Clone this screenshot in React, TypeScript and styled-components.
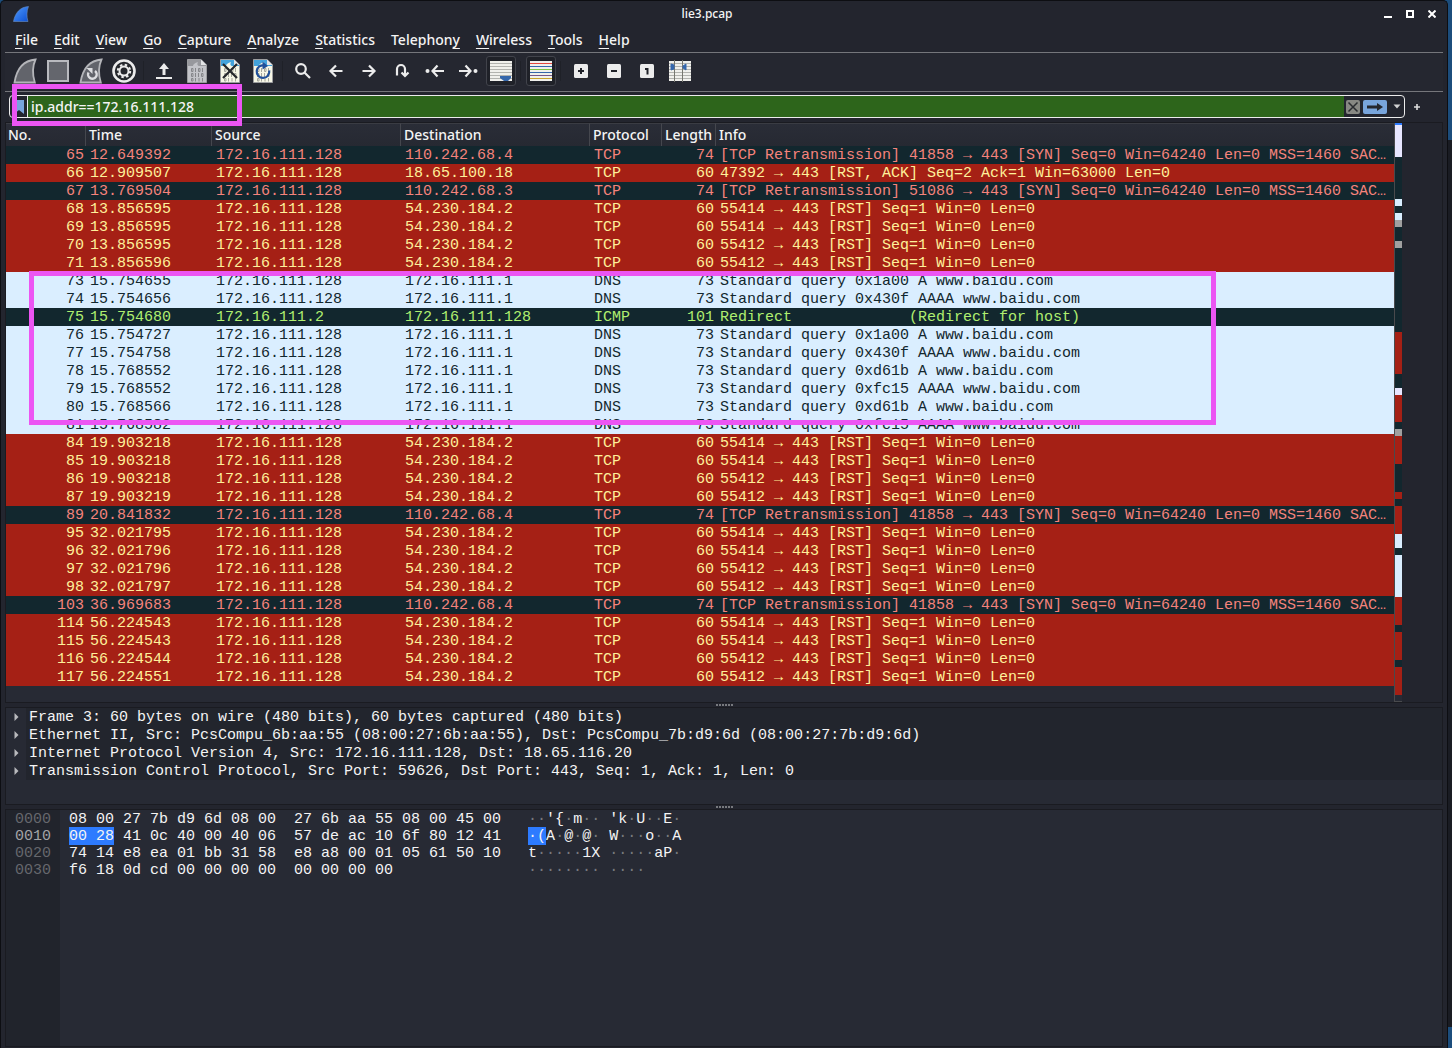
import React from "react";
import styled, { createGlobalStyle } from "styled-components";

const ui = `"Noto Sans", "Open Sans", sans-serif`;
const mono = `"Liberation Mono", "DejaVu Sans Mono", monospace`;

const GlobalStyle = createGlobalStyle`
  *, *::before, *::after { box-sizing: border-box; }
  body { margin: 0; background: #1a1c23; }
  button { margin: 0; padding: 0; border: 0; background: none; color: inherit; font: inherit; }
`;

const Desktop = styled.div`
  display: grid;
  grid-template-columns: minmax(0, 1fr) 4px;
  min-height: 100vh;
  background: #1c4d7c;
  color: #f4f4f4;
  font: 500 14px/20px ${ui};
`;

const Window = styled.main`
  display: flex;
  flex-direction: column;
  padding: 0 4px 1px;
  border: 1px solid #0d0e12;
  border-bottom: 0;
  border-radius: 5px 5px 0 0;
  background: #23252e;
`;

const DesktopEdge = styled.div`
  display: flex;
  flex-direction: column;
  padding: 140px 0 21px;
  &::before { content: ""; flex: 1; background: #1a1c23; }
`;

const TitleBar = styled.header`
  display: flex;
  align-items: center;
  height: 26px;
  padding: 0 0 0 8px;
`;

const Title = styled.h1`
  flex: 1;
  margin: 0;
  padding-left: 8px;
  text-align: center;
  font-size: 12px;
  font-weight: 500;
  line-height: 16px;
`;

const WindowButtons = styled.div`
  display: flex;
`;

const WindowButton = styled.button`
  display: grid;
  place-items: center;
  width: 22px;
  height: 20px;
`;

const MenuBar = styled.nav`
  display: flex;
  align-items: flex-start;
  gap: 16px;
  height: 26px;
  padding: 0 10px;
  border-bottom: 1px solid #75767b;
`;

const MenuButton = styled.button`
  line-height: 26px;
  white-space: nowrap;
  u { text-underline-offset: 3px; text-decoration-thickness: 1px; }
`;

const ToolBar = styled.div`
  display: flex;
  align-items: center;
  height: 39px;
  padding: 0 3px 2px;
  border-bottom: 1px solid #75767b;
  background: #252730;
`;

const ToolButton = styled.button`
  display: grid;
  place-items: center;
  width: 33px;
  height: 36px;
`;

const ToggleFrame = styled.span`
  display: grid;
  place-items: center;
  width: 30px;
  height: 30px;
  border: 1px solid #41434b;
  border-radius: 3px;
  background: #1f2128;
`;

const ToolDivider = styled.span`
  width: 1px;
  height: 20px;
  margin: 0 3px;
  background: #1f2128;
`;

const FilterBar = styled.form`
  position: relative;
  display: flex;
  align-items: center;
  padding: 3px 19px 4px 4px;
`;

const FilterBox = styled.div`
  display: flex;
  flex: 1;
  height: 23px;
  overflow: hidden;
  border: 1px solid #ececec;
  border-radius: 4px;
`;

const BookmarkButton = styled.button`
  display: grid;
  place-items: center;
  width: 18px;
  border-right: 1px solid #ececec;
`;

const FilterInput = styled.input`
  flex: 1;
  min-width: 0;
  padding: 0 3px;
  border: 0;
  outline: 0;
  background: #2d651b;
  color: #f4f4f4;
  font: 500 14px/20px ${ui};
`;

const FilterActions = styled.div`
  display: flex;
  align-items: center;
  gap: 3px;
  padding-left: 2px;
`;

const FilterAction = styled.button<{ $width: number; $fill?: string }>`
  display: grid;
  place-items: center;
  width: ${(p) => p.$width}px;
  height: 14px;
  border-radius: 2px;
  background: ${(p) => p.$fill ?? "none"};
`;

const AddButton = styled.button`
  display: grid;
  place-items: center;
  width: 14px;
  height: 16px;
`;

const AddSlot = styled.div`
  padding-left: 5px;
`;

const Highlight = styled.div<{ $left: number; $top: number; $width: number; $height: number }>`
  position: absolute;
  z-index: 2;
  left: ${(p) => p.$left}px;
  top: ${(p) => p.$top}px;
  width: ${(p) => p.$width}px;
  height: ${(p) => p.$height}px;
  border: 5px solid #ec55f3;
  pointer-events: none;
`;

const Pane = styled.section<{ $grow?: boolean }>`
  position: relative;
  display: flex;
  flex: ${(p) => (p.$grow ? "1 0 auto" : "none")};
  border: 1px solid #1a1b21;
  background: #272a34;
`;

const PacketArea = styled.div`
  flex: 1;
  min-width: 0;
  padding-bottom: 16px;
`;

const PacketTable = styled.table`
  width: 100%;
  table-layout: fixed;
  border-collapse: separate;
  border-spacing: 0;
`;

const Column = styled.col<{ $width?: number }>`
  width: ${(p) => (p.$width ? `${p.$width}px` : "auto")};
`;

const HeadCell = styled.th`
  height: 23px;
  padding: 0 2px 0 3px;
  overflow: hidden;
  border-top: 1px solid #3a3c43;
  border-right: 1px solid #45474e;
  background: linear-gradient(#2a2d37, #262932);
  font-weight: 500;
  line-height: 20px;
  text-align: left;
  white-space: nowrap;
  &:first-child { padding-left: 2px; }
  &:last-child { border-right: 0; }
`;

type Kind = "reset" | "bad" | "dns" | "icmp";

const palette: Record<Kind, [string, string]> = {
  reset: ["#a52015", "#fff09a"],
  bad: ["#12272e", "#f5837c"],
  dns: ["#daeeff", "#12272e"],
  icmp: ["#12272e", "#b0ef70"],
};

const PacketRow = styled.tr<{ $kind: Kind }>`
  background: ${(p) => palette[p.$kind][0]};
  color: ${(p) => palette[p.$kind][1]};
`;

const Cell = styled.td<{ $right?: boolean }>`
  height: 18px;
  padding: 1px ${(p) => (p.$right ? 2 : 4)}px 0 4px;
  overflow: hidden;
  font: 15px/17px ${mono};
  text-align: ${(p) => (p.$right ? "right" : "left")};
  text-overflow: ellipsis;
  white-space: pre;
`;

const MiniMap = styled.div`
  width: 8px;
  border-left: 1px solid #494a4d;
  border-bottom: 1px solid #494a4d;
`;

const MiniMapBand = styled.div<{ $height: number; $color: string }>`
  height: ${(p) => p.$height}px;
  background: ${(p) => p.$color};
`;

const ScrollGutter = styled.div`
  width: 40px;
  background: #23252e;
`;

const Splitter = styled.div`
  display: flex;
  justify-content: center;
  align-items: center;
  gap: 1px;
  height: 4px;
`;

const Grip = styled.span`
  width: 2px;
  height: 2px;
  background: #77797e;
`;

const DetailTree = styled.ul`
  flex: 1;
  margin: 0;
  padding: 0 0 24px;
  list-style: none;
`;

const DetailItem = styled.li`
  display: flex;
  height: 18px;
  font: 15px/17px ${mono};
  white-space: pre;
`;

const Expander = styled.button`
  display: grid;
  place-items: center;
  width: 20px;
`;

const DetailText = styled.span`
  flex: 1;
  padding: 1px 0 0 3px;
  background: #22252d;
`;

const HexOffsets = styled.div`
  width: 54px;
  padding: 1px 0 0 9px;
  background: #21242c;
`;

const HexBytes = styled.div`
  padding: 1px 0 0 9px;
`;

const HexAscii = styled.div`
  padding: 1px 0 0 27px;
`;

const HexLine = styled.div<{ $tone?: string }>`
  height: 17px;
  color: ${(p) => p.$tone ?? "#f4f4f4"};
  font: 15px/17px ${mono};
  white-space: pre;
`;

const Selected = styled.mark`
  padding-top: 1px;
  background: #2d7bff;
  color: #f4f4f4;
`;

const Dim = styled.span`
  color: #77797e;
`;

const menus: [string, string, string][] = [
  ["", "F", "ile"], ["", "E", "dit"], ["", "V", "iew"], ["", "G", "o"],
  ["", "C", "apture"], ["", "A", "nalyze"], ["", "S", "tatistics"],
  ["Telephon", "y", ""], ["", "W", "ireless"], ["", "T", "ools"], ["", "H", "elp"],
];

const retransmit = (port: number) =>
  `[TCP Retransmission] ${port} → 443 [SYN] Seq=0 Win=64240 Len=0 MSS=1460 SAC…`;
const reset = (port: number) => `${port} → 443 [RST] Seq=1 Win=0 Len=0`;
const query = (id: string, type: string) => `Standard query ${id} ${type} www.baidu.com`;

type Packet = [number, string, string, string, string, number, string, Kind];
const me = "172.16.111.128";
const rst = (no: number, time: string, port: number): Packet =>
  [no, time, me, "54.230.184.2", "TCP", 60, reset(port), "reset"];
const dns = (no: number, time: string, id: string, type: string): Packet =>
  [no, time, me, "172.16.111.1", "DNS", 73, query(id, type), "dns"];
const bad = (no: number, time: string, dst: string, port: number): Packet =>
  [no, time, me, dst, "TCP", 74, retransmit(port), "bad"];

const packets: Packet[] = [
  bad(65, "12.649392", "110.242.68.4", 41858),
  [66, "12.909507", me, "18.65.100.18", "TCP", 60, "47392 → 443 [RST, ACK] Seq=2 Ack=1 Win=63000 Len=0", "reset"],
  bad(67, "13.769504", "110.242.68.3", 51086),
  rst(68, "13.856595", 55414),
  rst(69, "13.856595", 55414),
  rst(70, "13.856595", 55412),
  rst(71, "13.856596", 55412),
  dns(73, "15.754655", "0x1a00", "A"),
  dns(74, "15.754656", "0x430f", "AAAA"),
  [75, "15.754680", "172.16.111.2", me, "ICMP", 101, "Redirect             (Redirect for host)", "icmp"],
  dns(76, "15.754727", "0x1a00", "A"),
  dns(77, "15.754758", "0x430f", "AAAA"),
  dns(78, "15.768552", "0xd61b", "A"),
  dns(79, "15.768552", "0xfc15", "AAAA"),
  dns(80, "15.768566", "0xd61b", "A"),
  dns(81, "15.768582", "0xfc15", "AAAA"),
  rst(84, "19.903218", 55414),
  rst(85, "19.903218", 55414),
  rst(86, "19.903218", 55412),
  rst(87, "19.903219", 55412),
  bad(89, "20.841832", "110.242.68.4", 41858),
  rst(95, "32.021795", 55414),
  rst(96, "32.021796", 55414),
  rst(97, "32.021796", 55412),
  rst(98, "32.021797", 55412),
  bad(103, "36.969683", "110.242.68.4", 41858),
  rst(114, "56.224543", 55414),
  rst(115, "56.224543", 55414),
  rst(116, "56.224544", 55412),
  rst(117, "56.224551", 55412),
];

const R = "#a52015", D = "#12272e", L = "#daeeff", V = "#e7e6ff", G = "#a0a0a0";
const bands: [number, string][] = [
  [2, "#2d7bff"], [32, V], [42, D], [7, L], [7, D], [7, L], [7, G], [14, D], [7, G],
  [84, D], [42, R], [14, D], [7, V], [27, R], [7, D], [7, G], [28, R], [28, D], [7, R],
  [7, D], [28, R], [14, L], [7, D], [42, L], [28, R], [7, D], [28, R], [7, D], [28, R],
];

const details = [
  "Frame 3: 60 bytes on wire (480 bits), 60 bytes captured (480 bits)",
  "Ethernet II, Src: PcsCompu_6b:aa:55 (08:00:27:6b:aa:55), Dst: PcsCompu_7b:d9:6d (08:00:27:7b:d9:6d)",
  "Internet Protocol Version 4, Src: 172.16.111.128, Dst: 18.65.116.20",
  "Transmission Control Protocol, Src Port: 59626, Dst Port: 443, Seq: 1, Ack: 1, Len: 0",
];

// offset, selected bytes, remaining bytes, selected characters, remaining characters
const dump: [string, string, string, string, string][] = [
  ["0000", "", "08 00 27 7b d9 6d 08 00  27 6b aa 55 08 00 45 00", "", "··'{·m·· 'k·U··E·"],
  ["0010", "00 28", " 41 0c 40 00 40 06  57 de ac 10 6f 80 12 41", "·(", "A·@·@· W···o··A"],
  ["0020", "", "74 14 e8 ea 01 bb 31 58  e8 a8 00 01 05 61 50 10", "", "t·····1X ·····aP·"],
  ["0030", "", "f6 18 0d cd 00 00 00 00  00 00 00 00", "", "········ ····"],
];

const Ascii = ({ text }: { text: string }) => (
  <>
    {text.split(/(·+)/).map((part, i) =>
      part.startsWith("·") ? <Dim key={i}>{part}</Dim> : part
    )}
  </>
);

const ink = "#ececec";

const Fin = ({ children }: { children?: React.ReactNode }) => (
  <svg width="24" height="26" viewBox="0 0 24 26">
    <path d="M1.5 24.5C3.5 12 10 2.500 22.500 1.500C19.500 8 19.500 17 21.800 24.500Z" fill="#62646b" stroke="#b4b5b9" strokeWidth="1.800" />
    {children}
  </svg>
);

const Page = ({ top, paper, mark, children }: { top: string; paper: string; mark: string; children?: React.ReactNode }) => (
  <svg width="22" height="26" viewBox="0 0 22 26">
    <path d="M1.500 1.500H15L20.500 7V24.500H1.500Z" fill={paper} stroke="#9c9da0" />
    <path d="M2 2H15V7H20V8H14C11 8 11 6 12 4C9 5 7 6 7 8H2Z" fill={top} />
    <path d="M15 1.500V7H20.500Z" fill="#e3e4e6" />
    <g fill="none" stroke={mark} strokeWidth="1">
      <path d="M5.500 10.500h1.500v3h-1.500zM12.500 10.500h1.500v3h-1.500zM9.500 10v4M16.500 10v4" />
      <path d="M5.500 15.500h1.500v3h-1.500zM15.500 15.500h1.500v3h-1.500zM9.500 15v4M12.500 15v4" />
      <path d="M5.500 20.500h1.500v2.500h-1.500zM9.500 20v3.500M13 20v3.500M16.500 20v3.500" />
    </g>
    {children}
  </svg>
);

const Stroke = ({ d, children }: { d: string; children?: React.ReactNode }) => (
  <svg width="20" height="20" viewBox="0 0 20 20" fill="none" stroke={ink} strokeWidth="2.200">
    <path d={d} />
    {children}
  </svg>
);

const Tile = ({ d }: { d: string }) => (
  <svg width="14" height="14" viewBox="0 0 14 14">
    <rect width="14" height="14" rx="1.500" fill={ink} />
    <path d={d} fill="none" stroke="#202229" strokeWidth="2" />
  </svg>
);

const Lines = ({ colors, children }: { colors: string[]; children?: React.ReactNode }) => (
  <svg width="22" height="22" viewBox="0 0 22 22">
    <rect y="1" width="22" height="20" fill="#f0f0ec" />
    {colors.map((c, i) => (
      <path key={i} d={`M0 ${3.5 + i * 3}H22`} stroke={c} />
    ))}
    {children}
  </svg>
);

const gray6 = Array(6).fill("#b2b3af");

type Tool = { label: string; icon: React.ReactNode; pressed?: boolean } | null;

const tools: Tool[] = [
  { label: "Start capture", icon: <Fin /> },
  {
    label: "Stop capture",
    icon: (
      <svg width="22" height="22" viewBox="0 0 22 22">
        <rect x="1" y="1" width="20" height="20" fill="#64666d" stroke="#b9babf" strokeWidth="2" />
      </svg>
    ),
  },
  {
    label: "Restart capture",
    icon: (
      <Fin>
        <path d="M9.500 14.500A4.300 4.300 0 1 0 16 13" fill="none" stroke="#dddee1" strokeWidth="2.400" />
        <path d="M7.500 10H13.500V16Z" fill="#dddee1" />
      </Fin>
    ),
  },
  {
    label: "Capture options",
    icon: (
      <svg width="24" height="24" viewBox="0 0 24 24" fill="none">
        <circle cx="12" cy="12" r="10.500" stroke={ink} strokeWidth="2.600" fill="#25272c" />
        <circle cx="12" cy="12" r="4.500" stroke={ink} strokeWidth="2" />
        <circle cx="12" cy="12" r="6.200" stroke={ink} strokeWidth="2" strokeDasharray="2.435 2.435" />
      </svg>
    ),
  },
  null,
  {
    label: "Open file",
    icon: (
      <svg width="18" height="20" viewBox="0 0 18 20" fill={ink}>
        <path d="M1 16H17V18H1ZM7.500 14V8H4L9 2L14 8H10.500V14Z" />
      </svg>
    ),
  },
  { label: "Save file", icon: <Page top="#97989d" paper="#c3c4c9" mark="#85868a" /> },
  {
    label: "Close file",
    icon: (
      <Page top="#43a3dc" paper="#f6f6e6" mark="#a5a69c">
        <path d="M4 6L18 20M18 6L4 20" stroke="#24272b" strokeWidth="2.200" />
      </Page>
    ),
  },
  {
    label: "Reload file",
    icon: (
      <Page top="#43a3dc" paper="#f6f6e6" mark="#a5a69c">
        <path d="M12.500 7.500A6.300 6.300 0 1 0 17.200 12.500" fill="none" stroke="#20509a" strokeWidth="2.200" />
        <path d="M10.500 3.500L16 8L10.500 11.500Z" fill="#20509a" />
      </Page>
    ),
  },
  null,
  { label: "Find packet", icon: <Stroke d="M11.500 11.500L17 17"><circle cx="8" cy="8" r="4.800" /></Stroke> },
  { label: "Previous packet", icon: <Stroke d="M16.500 10H5M10 4.500L4.500 10L10 15.500" /> },
  { label: "Next packet", icon: <Stroke d="M3.500 10H15M10 4.500L15.500 10L10 15.500" /> },
  { label: "Go to packet", icon: <Stroke d="M5 14.500V8A4 4 0 0 1 13 8V14M9.500 11.500L13 15L16.500 11.500" /> },
  { label: "First packet", icon: <Stroke d="M19 10H8M12.500 4.500L7.500 10L12.500 15.500"><circle cx="2.500" cy="10" r="2" fill={ink} stroke="none" /></Stroke> },
  { label: "Last packet", icon: <Stroke d="M1 10H12M7.500 4.500L12.500 10L7.500 15.500"><circle cx="17.500" cy="10" r="2" fill={ink} stroke="none" /></Stroke> },
  {
    label: "Auto scroll",
    pressed: true,
    icon: <Lines colors={gray6}><path d="M10 16H21V18L18 21H14L10 18Z" fill="#3567ab" /></Lines>,
  },
  null,
  {
    label: "Colorize packets",
    pressed: true,
    icon: <Lines colors={["#e3483f", "#3567ab", "#7dc544", "#3567ab", "#75568a", "#c8a02a"]} />,
  },
  null,
  { label: "Zoom in", icon: <Tile d="M7 4V10M4 7H10" /> },
  { label: "Zoom out", icon: <Tile d="M4 7H10" /> },
  { label: "Normal size", icon: <Tile d="M5 5H7.500V10.500" /> },
  {
    label: "Resize columns",
    icon: (
      <Lines colors={gray6}>
        <path d="M5.500 0V22M13.500 0V22" stroke="#76776f" />
        <path d="M2 4L5 5V9L2 10ZM17 4L14 6V8L17 10Z" fill="#3567ab" stroke="#3567ab" />
      </Lines>
    ),
  },
];

const Grips = () => (
  <Splitter>
    {[0, 1, 2, 3, 4, 5].map((i) => <Grip key={i} />)}
  </Splitter>
);

export default function App() {
  return (
    <Desktop>
      <GlobalStyle />
      <Window>
        <TitleBar>
          <svg width="16" height="16" viewBox="0 0 16 16">
            <defs>
              <linearGradient id="fin" x1="0" y1="0" x2="1" y2="1">
                <stop offset="0" stopColor="#4f9bff" />
                <stop offset="1" stopColor="#0d4fd0" />
              </linearGradient>
            </defs>
            <path d="M0.500 15.500C2 7 7 1 15.500 0.500C13.500 5 13.500 11 15 15.500Z" fill="url(#fin)" stroke="#6a8fc4" strokeWidth="0.600" />
          </svg>
          <Title>lie3.pcap</Title>
          <WindowButtons>
            <WindowButton aria-label="Minimize">
              <svg width="8" height="8" viewBox="0 0 8 8"><path d="M0 7H8" stroke="#fff" strokeWidth="2" /></svg>
            </WindowButton>
            <WindowButton aria-label="Maximize">
              <svg width="8" height="8" viewBox="0 0 8 8"><path d="M1 1H7V7H1Z" fill="none" stroke="#fff" strokeWidth="2" /></svg>
            </WindowButton>
            <WindowButton aria-label="Close">
              <svg width="8" height="8" viewBox="0 0 8 8"><path d="M0.500 0.500L7.500 7.500M7.500 0.500L0.500 7.500" stroke="#fff" strokeWidth="2" /></svg>
            </WindowButton>
          </WindowButtons>
        </TitleBar>

        <MenuBar>
          {menus.map(([before, key, after]) => (
            <MenuButton key={before + key + after}>{before}<u>{key}</u>{after}</MenuButton>
          ))}
        </MenuBar>

        <ToolBar>
          {tools.map((tool, i) =>
            tool ? (
              <ToolButton key={i} aria-label={tool.label} aria-pressed={tool.pressed}>
                {tool.pressed ? <ToggleFrame>{tool.icon}</ToggleFrame> : tool.icon}
              </ToolButton>
            ) : (
              <ToolDivider key={i} />
            )
          )}
        </ToolBar>

        <FilterBar onSubmit={(e) => e.preventDefault()}>
          <FilterBox>
            <BookmarkButton type="button" aria-label="Filter bookmarks">
              <svg width="12" height="16" viewBox="0 0 12 16"><path d="M1 1H11V15L6 11L1 15Z" fill="#78a5dc" /></svg>
            </BookmarkButton>
            <FilterInput aria-label="Display filter" defaultValue="ip.addr==172.16.111.128" spellCheck={false} />
            <FilterActions>
              <FilterAction type="button" aria-label="Clear filter" $width={14} $fill="#878883">
                <svg width="12" height="12" viewBox="0 0 12 12"><path d="M1.500 1.500L10.500 10.500M10.500 1.500L1.500 10.500" stroke="#2a2c30" strokeWidth="1.500" /></svg>
              </FilterAction>
              <FilterAction type="submit" aria-label="Apply filter" $width={24} $fill="#78a5dc">
                <svg width="18" height="10" viewBox="0 0 18 10"><path d="M1 3.500H11V1L17 5L11 9V6.500H1Z" fill="#24272e" /></svg>
              </FilterAction>
              <FilterAction type="button" aria-label="Recent filters" $width={14}>
                <svg width="8" height="5" viewBox="0 0 8 5"><path d="M0.500 0.500H7.500L4 4.500Z" fill="#d2d2d2" /></svg>
              </FilterAction>
            </FilterActions>
          </FilterBox>
          <AddSlot>
            <AddButton type="button" aria-label="Add filter button">
              <svg width="8" height="8" viewBox="0 0 8 8"><path d="M4 1V7M1 4H7" stroke="#dcdcdc" strokeWidth="1.600" /></svg>
            </AddButton>
          </AddSlot>
          <Highlight $left={7} $top={-8} $width={230} $height={42} />
        </FilterBar>

        <Pane aria-label="Packet list">
          <PacketArea>
            <PacketTable>
              <colgroup>
                <Column $width={80} />
                <Column $width={126} />
                <Column $width={189} />
                <Column $width={189} />
                <Column $width={72} />
                <Column $width={54} />
                <Column />
              </colgroup>
              <thead>
                <tr>
                  {["No.", "Time", "Source", "Destination", "Protocol", "Length", "Info"].map((name) => (
                    <HeadCell key={name} scope="col">{name}</HeadCell>
                  ))}
                </tr>
              </thead>
              <tbody>
                {packets.map(([no, time, src, dst, protocol, length, info, kind]) => (
                  <PacketRow key={no} $kind={kind}>
                    <Cell $right>{no}</Cell>
                    <Cell>{time}</Cell>
                    <Cell>{src}</Cell>
                    <Cell>{dst}</Cell>
                    <Cell>{protocol}</Cell>
                    <Cell $right>{length}</Cell>
                    <Cell>{info}</Cell>
                  </PacketRow>
                ))}
              </tbody>
            </PacketTable>
          </PacketArea>
          <MiniMap>
            {bands.map(([height, color], i) => <MiniMapBand key={i} $height={height} $color={color} />)}
          </MiniMap>
          <ScrollGutter />
          <Highlight $left={23} $top={148} $width={1187} $height={154} />
        </Pane>

        <Grips />

        <Pane aria-label="Packet details">
          <DetailTree>
            {details.map((text) => (
              <DetailItem key={text}>
                <Expander aria-label="Expand">
                  <svg width="5" height="8" viewBox="0 0 5 8"><path d="M0.500 0L4.500 4L0.500 8Z" fill="#b9babd" /></svg>
                </Expander>
                <DetailText>{text}</DetailText>
              </DetailItem>
            ))}
          </DetailTree>
        </Pane>

        <Grips />

        <Pane $grow aria-label="Packet bytes">
          <HexOffsets>
            {dump.map(([offset, picked]) => (
              <HexLine key={offset} $tone={picked ? "#a3a4a7" : "#66686d"}>{offset}</HexLine>
            ))}
          </HexOffsets>
          <HexBytes>
            {dump.map(([offset, picked, bytes]) => (
              <HexLine key={offset}>{picked && <Selected>{picked}</Selected>}{bytes}</HexLine>
            ))}
          </HexBytes>
          <HexAscii>
            {dump.map(([offset, , , picked, text]) => (
              <HexLine key={offset}>{picked && <Selected>{picked}</Selected>}<Ascii text={text} /></HexLine>
            ))}
          </HexAscii>
        </Pane>
      </Window>
      <DesktopEdge />
    </Desktop>
  );
}
